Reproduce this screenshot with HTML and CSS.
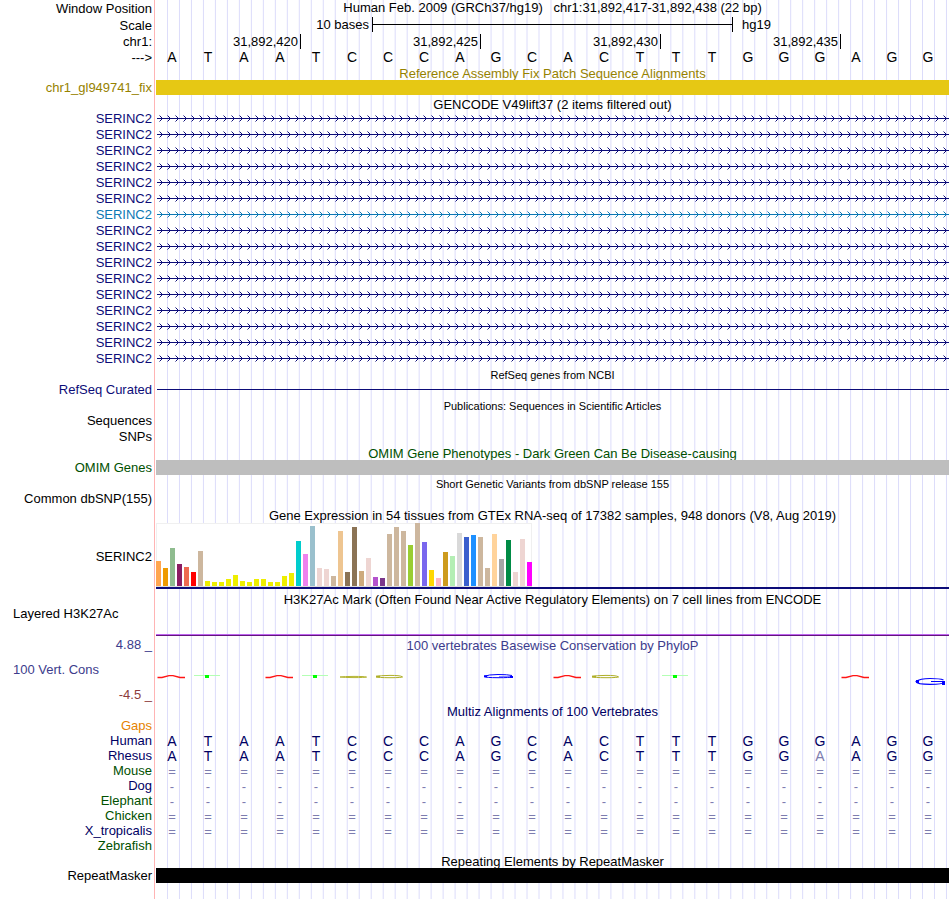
FILE: index.html
```html
<!DOCTYPE html>
<html lang="en">
<head>
<meta charset="utf-8">
<title>Human chr1:31,892,417-31,892,438</title>
<link rel="stylesheet" href="styles.css">
</head>
<body>
<svg class="defs" aria-hidden="true">
  <defs>
    <pattern id="arrows-navy" width="8" height="16" patternUnits="userSpaceOnUse">
      <path d="M4 5h1v1h-1zM5 6h1v1h-1zM6 7h1v1h-1zM5 8h1v1h-1zM4 9h1v1h-1z" fill="#0c0c78"/>
      <path d="M3 4h1v1h-1zM3 10h1v1h-1z" fill="#0c0c78" opacity="0.5"/>
    </pattern>
    <pattern id="arrows-blue" width="8" height="16" patternUnits="userSpaceOnUse">
      <path d="M4 5h1v1h-1zM5 6h1v1h-1zM6 7h1v1h-1zM5 8h1v1h-1zM4 9h1v1h-1z" fill="#0c78b4"/>
      <path d="M3 4h1v1h-1zM3 10h1v1h-1z" fill="#0c78b4" opacity="0.5"/>
    </pattern>
  </defs>
</svg>
<main class="browser">
  <div class="guides"></div>

  <section class="ruler">
    <div class="row head"><span class="label">Window Position</span><span class="caption">Human Feb. 2009 (GRCh37/hg19) &nbsp; chr1:31,892,417-31,892,438 (22 bp)</span></div>
    <div class="row head"><span class="label">Scale</span>
      <div class="columns"><span class="scale-from">10 bases</span><span class="scale-bar"></span><span class="scale-to">hg19</span></div>
    </div>
    <div class="row short"><span class="label">chr1:</span>
      <div class="columns"><span class="tick t1">31,892,420</span><span class="tick t2">31,892,425</span><span class="tick t3">31,892,430</span><span class="tick t4">31,892,435</span></div>
    </div>
    <div class="row"><span class="label low">---&gt;</span><div class="bases" data-seq="ATAATCCCAGCACTTTGGGAGG"></div></div>
  </section>

  <section class="gold">
    <h2 class="title">Reference Assembly Fix Patch Sequence Alignments</h2>
    <div class="row"><span class="label">chr1_gl949741_fix</span><div class="block fix"></div></div>
  </section>

  <section>
    <h2 class="title">GENCODE V49lift37 (2 items filtered out)</h2>
    <div id="genes"></div>
  </section>

  <section>
    <h2 class="title small">RefSeq genes from NCBI</h2>
    <div class="row navy"><span class="label">RefSeq Curated</span><div class="intron"></div></div>
  </section>

  <section>
    <h2 class="title small">Publications: Sequences in Scientific Articles</h2>
    <div class="row"><span class="label">Sequences</span></div>
    <div class="row"><span class="label">SNPs</span></div>
  </section>

  <section class="green">
    <h2 class="title">OMIM Gene Phenotypes - Dark Green Can Be Disease-causing</h2>
    <div class="row"><span class="label">OMIM Genes</span><div class="block omim"></div></div>
  </section>

  <section>
    <h2 class="title small">Short Genetic Variants from dbSNP release 155</h2>
    <div class="row"><span class="label">Common dbSNP(155)</span></div>
  </section>

  <section>
    <h2 class="title">Gene Expression in 54 tissues from GTEx RNA-seq of 17382 samples, 948 donors (V8, Aug 2019)</h2>
    <div class="row expression"><span class="label">SERINC2</span><div class="plot"><div class="bars" id="bars"></div></div></div>
  </section>

  <section>
    <h2 class="title">H3K27Ac Mark (Often Found Near Active Regulatory Elements) on 7 cell lines from ENCODE</h2>
    <div class="row histone"><span class="label left">Layered H3K27Ac</span><div class="signal"></div></div>
  </section>

  <section class="phylo">
    <div class="row short"><span class="label">4.88 _</span><h2 class="caption low">100 vertebrates Basewise Conservation by PhyloP</h2></div>
    <div class="row conservation">
      <div class="limits"><span class="label left">100 Vert. Cons</span><span class="label negative">-4.5 _</span></div>
      <div class="bases" id="marks"></div>
    </div>
  </section>

  <section>
    <h2 class="title deep">Multiz Alignments of 100 Vertebrates</h2>
    <div class="row short orange"><span class="label">Gaps</span></div>
    <div class="row short deep"><span class="label">Human</span><div class="bases" data-seq="ATAATCCCAGCACTTTGGGAGG"></div></div>
    <div class="row short deep"><span class="label">Rhesus</span><div class="bases" data-seq="ATAATCCCAGCACTTTGGaAGG"></div></div>
    <div class="row short green"><span class="label">Mouse</span><div class="bases unaligned" data-seq="======================"></div></div>
    <div class="row short deep"><span class="label">Dog</span><div class="bases unaligned" data-seq="----------------------"></div></div>
    <div class="row short green"><span class="label">Elephant</span><div class="bases unaligned" data-seq="----------------------"></div></div>
    <div class="row short green"><span class="label">Chicken</span><div class="bases unaligned" data-seq="======================"></div></div>
    <div class="row short deep"><span class="label">X_tropicalis</span><div class="bases unaligned" data-seq="======================"></div></div>
    <div class="row short green"><span class="label">Zebrafish</span></div>
  </section>

  <section>
    <h2 class="title">Repeating Elements by RepeatMasker</h2>
    <div class="row"><span class="label">RepeatMasker</span><div class="block repeat"></div></div>
  </section>
</main>
<script src="script.js"></script>
</body>
</html>
```
FILE: styles.css
```css
* { box-sizing: border-box; }

body {
  margin: 0;
  background: #fff;
  color: #000;
  font: 13px/16px "Liberation Sans", Arial, sans-serif;
}

.defs { position: absolute; width: 0; height: 0; }

.browser {
  position: relative;
  z-index: 0;
  min-height: 100vh;
  margin-right: 1px;
  padding-bottom: 15px;
}

/* One vertical line every third of a base */
.guides {
  position: absolute;
  z-index: -1;
  inset: 0 0 0 154px;
  padding-left: 1px;
  border-left: 1px solid #ffb4b4;
  background: linear-gradient(to left, #dcdcfa 1px, transparent 1px) 0 0 / calc((100% - 1px) / 66) 100% content-box;
}

.row {
  display: grid;
  grid-template-columns: 156px minmax(0, 1fr);
  height: 16px;
}
.row.short { height: 15px; }
.row.head { height: 17px; }

.label { padding-right: 4px; text-align: right; white-space: nowrap; }
.head .label, .label.low { line-height: 18px; }
.label.left { padding-left: 13px; text-align: left; }

.title, .caption {
  margin: 0;
  font-size: 13px;
  font-weight: normal;
  text-align: center;
  white-space: nowrap;
}
.title { height: 15px; padding-left: 156px; line-height: 18px; }
.title.small { font-size: 11px; line-height: 16px; }
.caption.low { line-height: 18px; }

.navy { color: #0c0c78; }
.blue { color: #0c78b4; }
.deep { color: #000064; }
.green { color: #005000; }
.gold { color: #968200; }
.orange { color: #e68200; }
.phylo { color: #3c3c8c; }
.negative { color: #8c3c3c; }

/* Ruler */
.columns {
  display: grid;
  grid-template-columns: repeat(22, minmax(0, 1fr));
  grid-template-rows: 15px;
  padding-right: 1px;
}
.columns > * { grid-row: 1; white-space: nowrap; }
.scale-from { grid-column: 1 / 7; padding-right: 3px; text-align: right; }
.scale-bar {
  grid-column: 7 / 17;
  margin-right: -1px;
  border: solid #000;
  border-width: 0 1px;
  background: linear-gradient(#000, #000) 0 7px / 100% 1px no-repeat;
}
.scale-to { grid-column: 17 / 23; padding-left: 10px; }
.tick {
  margin-right: -1px;
  padding-right: 2px;
  border-right: 1px solid #000;
  text-align: right;
}
.t1 { grid-column: 1 / 5; }
.t2 { grid-column: 5 / 10; }
.t3 { grid-column: 10 / 15; }
.t4 { grid-column: 15 / 20; }

.bases {
  display: grid;
  grid-template-columns: repeat(22, minmax(0, 1fr));
  margin: 0 3px 0 -2px;
  font-size: 14px;
  text-align: center;
}
.bases.unaligned { font-size: 13px; line-height: 18px; }
.faded { color: #7d7daf; }

/* Items */
.block { height: 15px; }
.fix { background: #e6c814; }
.omim { background: #bebebe; }
.repeat { background: #000; }
.strand { display: block; width: 100%; height: 16px; }
.intron { height: 1px; margin: 7px 0 0 1px; background: #0c0c78; }

/* Expression graph */
.expression { height: 69px; }
.expression .label { align-self: center; line-height: 18px; }
.plot { height: 67px; padding-top: 1px; border-bottom: 2px solid #0c0c78; }
.bars {
  display: flex;
  align-items: flex-end;
  gap: 2px;
  width: max-content;
  height: 64px;
  border-bottom: 1px solid #dcdcdc;
  background: #fff;
  box-shadow: inset -1px 1px #f0f0f0, inset 1px 0 #f0f0f0;
}
.bar { width: 5px; }

.histone { height: 31px; }
.signal { height: 2px; margin-top: 28px; border-top: 1px solid #be64f0; background: #64147d; }

.conservation { height: 51px; }
.limits { display: flex; flex-direction: column; gap: 9px; padding-top: 10px; }
.mark { display: block; width: 36px; height: 40px; }
```
FILE: script.js
```js
const SVG = (cls, body) => `<svg class="${cls}" aria-hidden="true">${body}</svg>`;

// Transcripts: the seventh is drawn in the alternate colour
document.getElementById('genes').innerHTML = Array.from({ length: 16 }, (_, i) => {
  const name = i === 6 ? 'blue' : 'navy';
  const art = `<rect x="1" y="7" width="100%" height="1" fill="currentColor"/><rect width="100%" height="16" fill="url(#arrows-${name})"/>`;
  return `<div class="row ${name}"><span class="label">SERINC2</span>${SVG('strand', art)}</div>`;
}).join('');

// Base rows: lower case marks a mismatch
document.querySelectorAll('[data-seq]').forEach(row => {
  row.innerHTML = [...row.dataset.seq].map(c =>
    `<span${/[a=-]/.test(c) ? ' class="faded"' : ''}>${c.toUpperCase()}</span>`).join('');
});

// Tissue medians: [height, colour]
const tan = '#cdb79e', brain = '#eeee00', pink = '#eed5d2';
const tissues = [
  [25, '#ffa54f'], [18, '#ee9a00'], [38, '#8fbc8f'], [22, '#8b1c62'], [19, '#ee6a50'], [14, '#ff0000'], [35, tan],
  ...[5, 4, 4, 7, 11, 5, 4, 7, 7, 4, 4, 10, 13].map(h => [h, brain]),
  [45, '#00cdcd'], [32, '#ee82ee'], [60, '#9ac0cd'], [18, pink], [17, pink], [10, tan], [55, '#eec591'],
  [14, '#8b7355'], [59, '#8b7355'], [15, '#cdaa7d'], [28, pink], [9, '#b452cd'], [8, '#7a378b'],
  [52, tan], [59, tan], [55, tan], [41, '#9acd32'], [63, tan], [44, '#7a67ee'], [16, '#ffd700'],
  [8, '#ffb6c1'], [34, '#cd9b1d'], [30, '#b4eeb4'], [53, '#d9d9d9'], [49, '#3a5fcd'], [51, '#1e90ff'],
  [49, tan], [18, tan], [52, '#ffd39b'], [27, '#a6a6a6'], [46, '#008b45'], [14, pink], [47, pink], [24, '#ff00ff']
];
document.getElementById('bars').innerHTML =
  tissues.map(([h, c]) => `<span class="bar" style="height:${h}px;background:${c}"></span>`).join('');

// Conservation scores, one flat mark for each scored base
const shapes = {
  A: '<path d="M3.5 25.5H8L15 23.6H19L26 25.5H31" fill="none" stroke="#ff1414" stroke-width="1.4"/>',
  T: '<path d="M4 23.5H30" stroke="#b4ffb4"/><path d="M15 24.5H19" stroke="#00ff00" stroke-width="3"/>',
  c: '<path d="M32 25Q30 24.4 20 24.4T6 25Q10 25.6 20 25.6T33 25" fill="none" stroke="#b4b432"/>',
  C: '<path d="M32 24.6Q30 23.4 20 23.4T6 24.6Q8 25.7 20 25.7T33 24.8" fill="none" stroke="#afaf28"/><path d="M6 24.6H10" stroke="#afaf28" stroke-width="2"/>',
  G: '<path d="M34 23.5Q30 22.5 20 22.5T6 24.5Q8 25.7 20 25.7T34 25" fill="none" stroke="#0000ff"/><path d="M6 24.3H9M32 25H35" stroke="#0000ff" stroke-width="2"/><path d="M21 24.6H34" stroke="#0000ff" stroke-opacity="0.5"/>',
  L: '<path d="M33.5 28Q30 26.5 20 26.5T6 29.5Q7 32.4 20 32.4T33 30.5" fill="none" stroke="#0000ff" stroke-width="1.1"/><path d="M6 29.5H9" stroke="#0000ff" stroke-width="3"/><path d="M21 29.5H35" stroke="#0000ff"/><path d="M32 31.5H35" stroke="#0000ff" stroke-width="3"/>'
};
document.getElementById('marks').innerHTML =
  [...'AT.ATcC..G.AC.T....A.L'].map(c => SVG('mark', shapes[c] || '')).join('');
```
